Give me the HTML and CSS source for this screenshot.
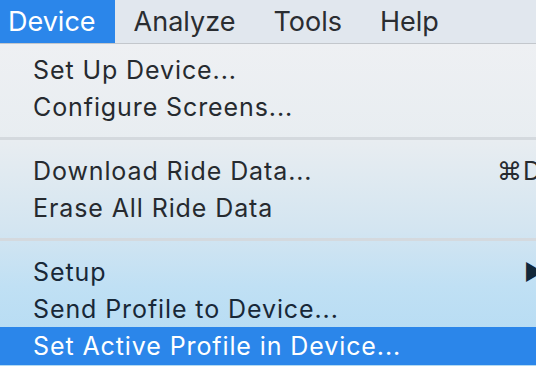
FILE: index.html
```html
<!DOCTYPE html>
<html>
<head>
    <title>Device Menu</title>
    <link rel="stylesheet" href="styles.css">
</head>
<body>

<!-- Menu bar -->
<div class="menubar">
    <span class="menubar-item active">Device</span>
    <span class="menubar-item">Analyze</span>
    <span class="menubar-item">Tools</span>
    <span class="menubar-item">Help</span>
</div>

<!-- Dropdown -->
<div class="menu">
    <div class="menu-item"><span>Set Up Device...</span></div>
    <div class="menu-item"><span>Configure Screens...</span></div>
    <div class="separator"></div>
    <div class="menu-item"><span>Download Ride Data...</span><span class="shortcut">&#8984;D</span></div>
    <div class="menu-item"><span>Erase All Ride Data</span></div>
    <div class="separator"></div>
    <div class="menu-item dark"><span>Setup</span><span class="arrow">&#9654;</span></div>
    <div class="menu-item dark"><span>Send Profile to Device...</span></div>
    <div class="menu-item selected"><span>Set Active Profile in Device...</span></div>
</div>

</body>
</html>
```

FILE: styles.css
```css
body {
    margin: 0;
    width: 536px;
    height: 366px;
    overflow: hidden;
    font-family: Inter, "Noto Sans", sans-serif;
    color: #262a2f;
}

/* Menu bar */
.menubar {
    display: flex;
    height: 43px;
    background-color: #e1e7ee;
    border-bottom: 1px solid #c3c7cc;
}

.menubar-item {
    display: flex;
    align-items: center;
    padding: 0 19px;
    font-size: 27px;
    color: #2a2d31;
}

.menubar-item:first-child {
    padding-left: 8px;
}

.menubar-item.active {
    background-color: #2b86ea;
    color: #fff;
}

/* Dropdown menu */
.menu {
    width: 600px;
    height: 322px;
    padding-top: 7px;
    box-sizing: border-box;
    background: linear-gradient(to bottom, #eef0f3 0%, #e8edf1 30%, #d3e5f1 58%, #c0e0f4 75%, #b2daf3 100%);
}

.menu-item {
    display: flex;
    align-items: center;
    height: 37px;
    padding-left: 33px;
    font-size: 25px;
    letter-spacing: 0.9px;
}

.menu-item.dark {
    color: #182838;
}

.menu-item.selected {
    height: 38px;
    background-color: #2b86ea;
    color: #fff;
}

.shortcut {
    margin-left: auto;
    padding-right: 58px;
    letter-spacing: 1px;
    color: #262a2f;
}

.arrow {
    margin-left: auto;
    padding-right: 55px;
    font-size: 22px;
    color: #12283a;
}

.separator {
    height: 3px;
    margin: 12px 0;
    background-color: #d4d9de;
}

.separator:nth-of-type(2) {
    background-color: #c7d9e4;
}
```
